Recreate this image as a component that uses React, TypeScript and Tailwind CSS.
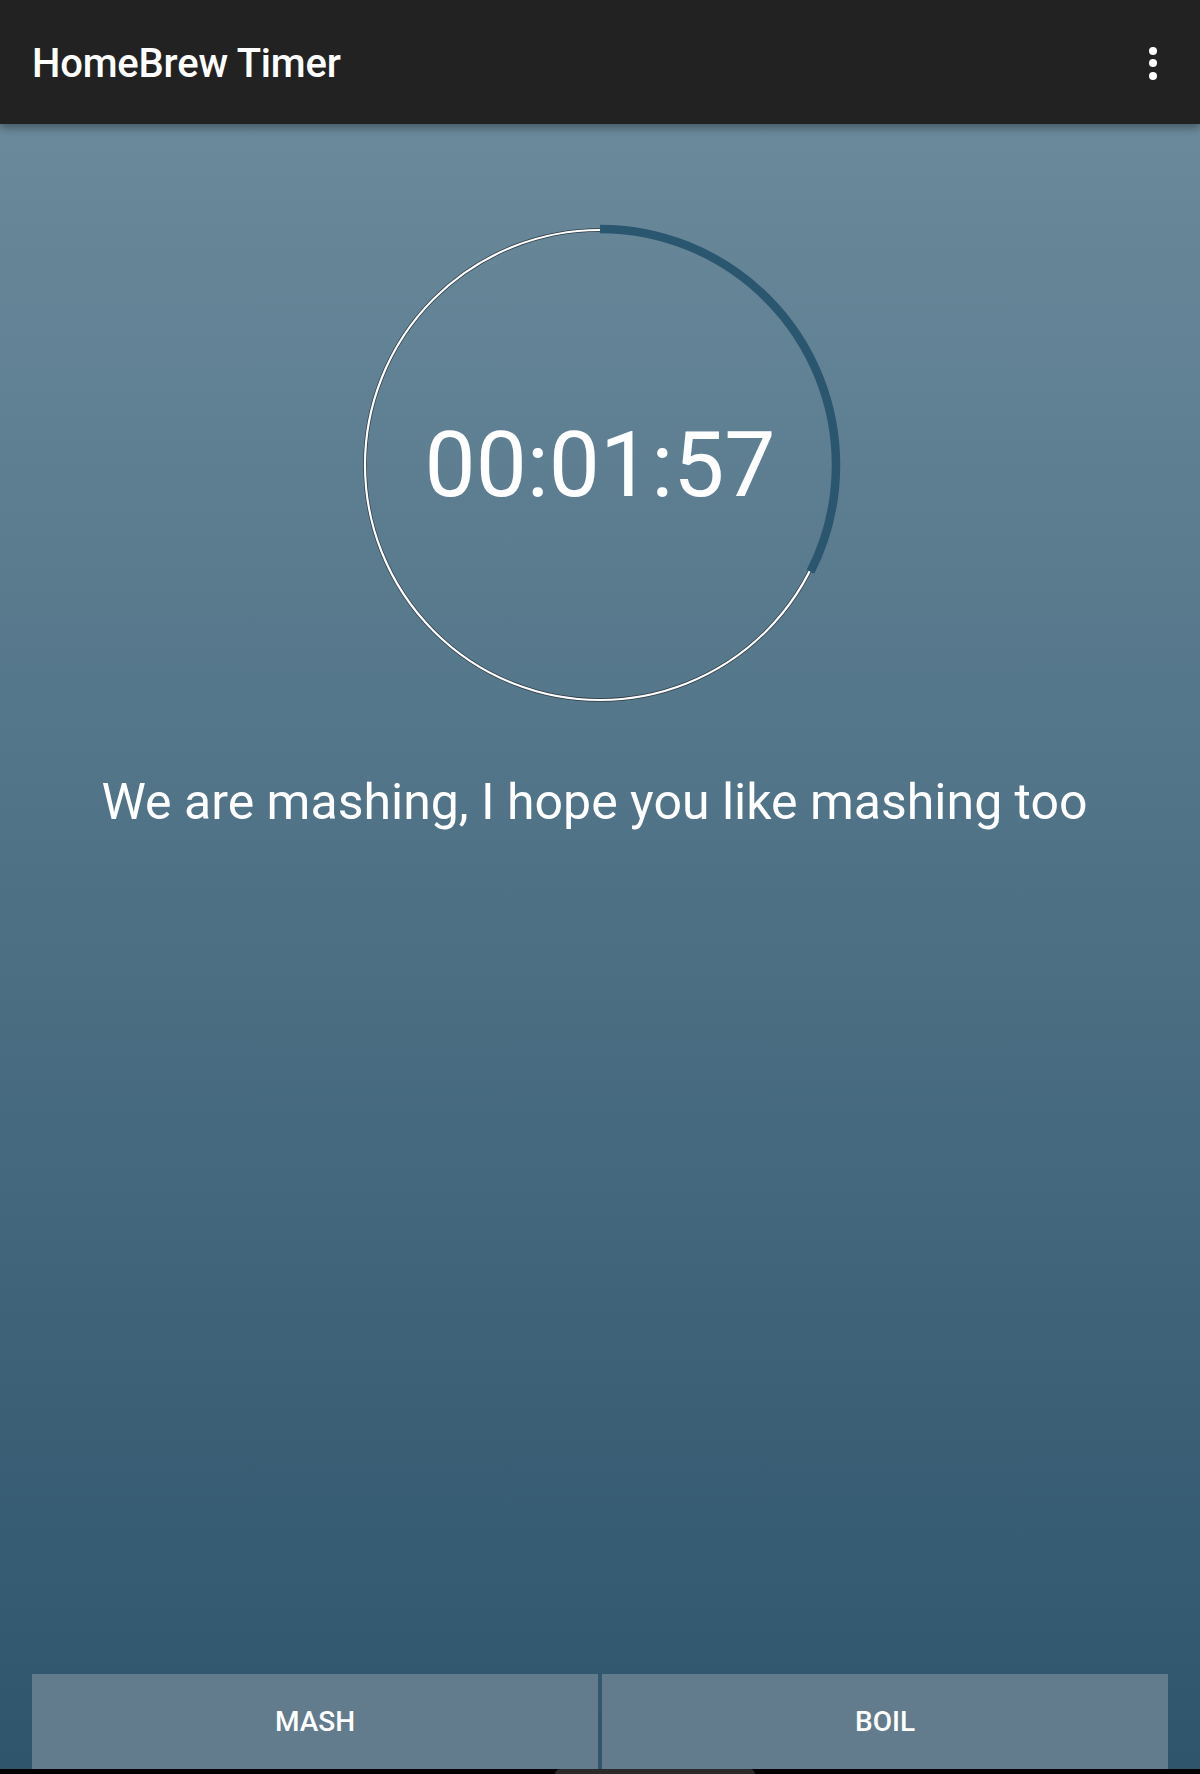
import React from 'react';

const R = 235;
const C = 2 * Math.PI * R;
const progress = 0.326;

function Ring() {
  return (
    <svg width="490" height="490" viewBox="0 0 490 490" className="block">
      <circle cx="245" cy="245" r={R} fill="none" stroke="#2d3b45" strokeWidth="3.6" />
      <circle cx="245" cy="245" r={R} fill="none" stroke="#ffffff" strokeWidth="2.2" />
      <circle
        cx="245"
        cy="245"
        r={R + 1}
        fill="none"
        stroke="#2b566f"
        strokeWidth="8.5"
        strokeDasharray={`${C * progress} ${C}`}
        transform="rotate(-90 245 245)"
      />
    </svg>
  );
}

export default function App() {
  return (
    <div
      className="relative flex h-[1774px] w-[1200px] flex-col overflow-hidden bg-gradient-to-b from-[#6f8e9f] to-[#2e556c]"
      style={{ fontFamily: 'Roboto, "Noto Sans", sans-serif' }}
    >
      {/* Toolbar */}
      <header className="relative z-10 flex h-[124px] shrink-0 items-center justify-between bg-[#232222] pl-[32px] pr-[43px] shadow-[0_4px_8px_rgba(0,0,0,0.35)]">
        <h1 className="pt-[3px] text-[40px] font-medium tracking-[-0.2px] text-white">HomeBrew Timer</h1>
        <div className="flex flex-col items-center gap-[4.5px] pt-[2px]">
          <span className="h-[8px] w-[8px] rounded-full bg-white" />
          <span className="h-[8px] w-[8px] rounded-full bg-white" />
          <span className="h-[8px] w-[8px] rounded-full bg-white" />
        </div>
      </header>

      {/* Timer */}
      <main className="flex flex-1 flex-col items-center">
        <div className="relative mt-[96px]">
          <Ring />
          <div className="absolute inset-0 flex items-center justify-center">
            <span className="text-[91px] font-normal leading-none text-white">00:01:57</span>
          </div>
        </div>
        <p className="mt-[67px] pr-[11px] text-center text-[50px] leading-none text-white">
          We are mashing, I hope you like mashing too
        </p>
      </main>

      {/* Buttons */}
      <div className="flex h-[95px] shrink-0 gap-[4px] px-[32px]">
        <button className="flex flex-1 items-center justify-center bg-[#627c8d] text-[28px] font-medium text-white">
          MASH
        </button>
        <button className="flex flex-1 items-center justify-center bg-[#627c8d] text-[28px] font-medium text-white">
          BOIL
        </button>
      </div>
      <div className="flex h-[5px] shrink-0 justify-center bg-black">
        <div className="ml-[110px] h-[5px] w-[200px] rounded-t-full bg-[#2a2a2a]" />
      </div>
    </div>
  );
}
